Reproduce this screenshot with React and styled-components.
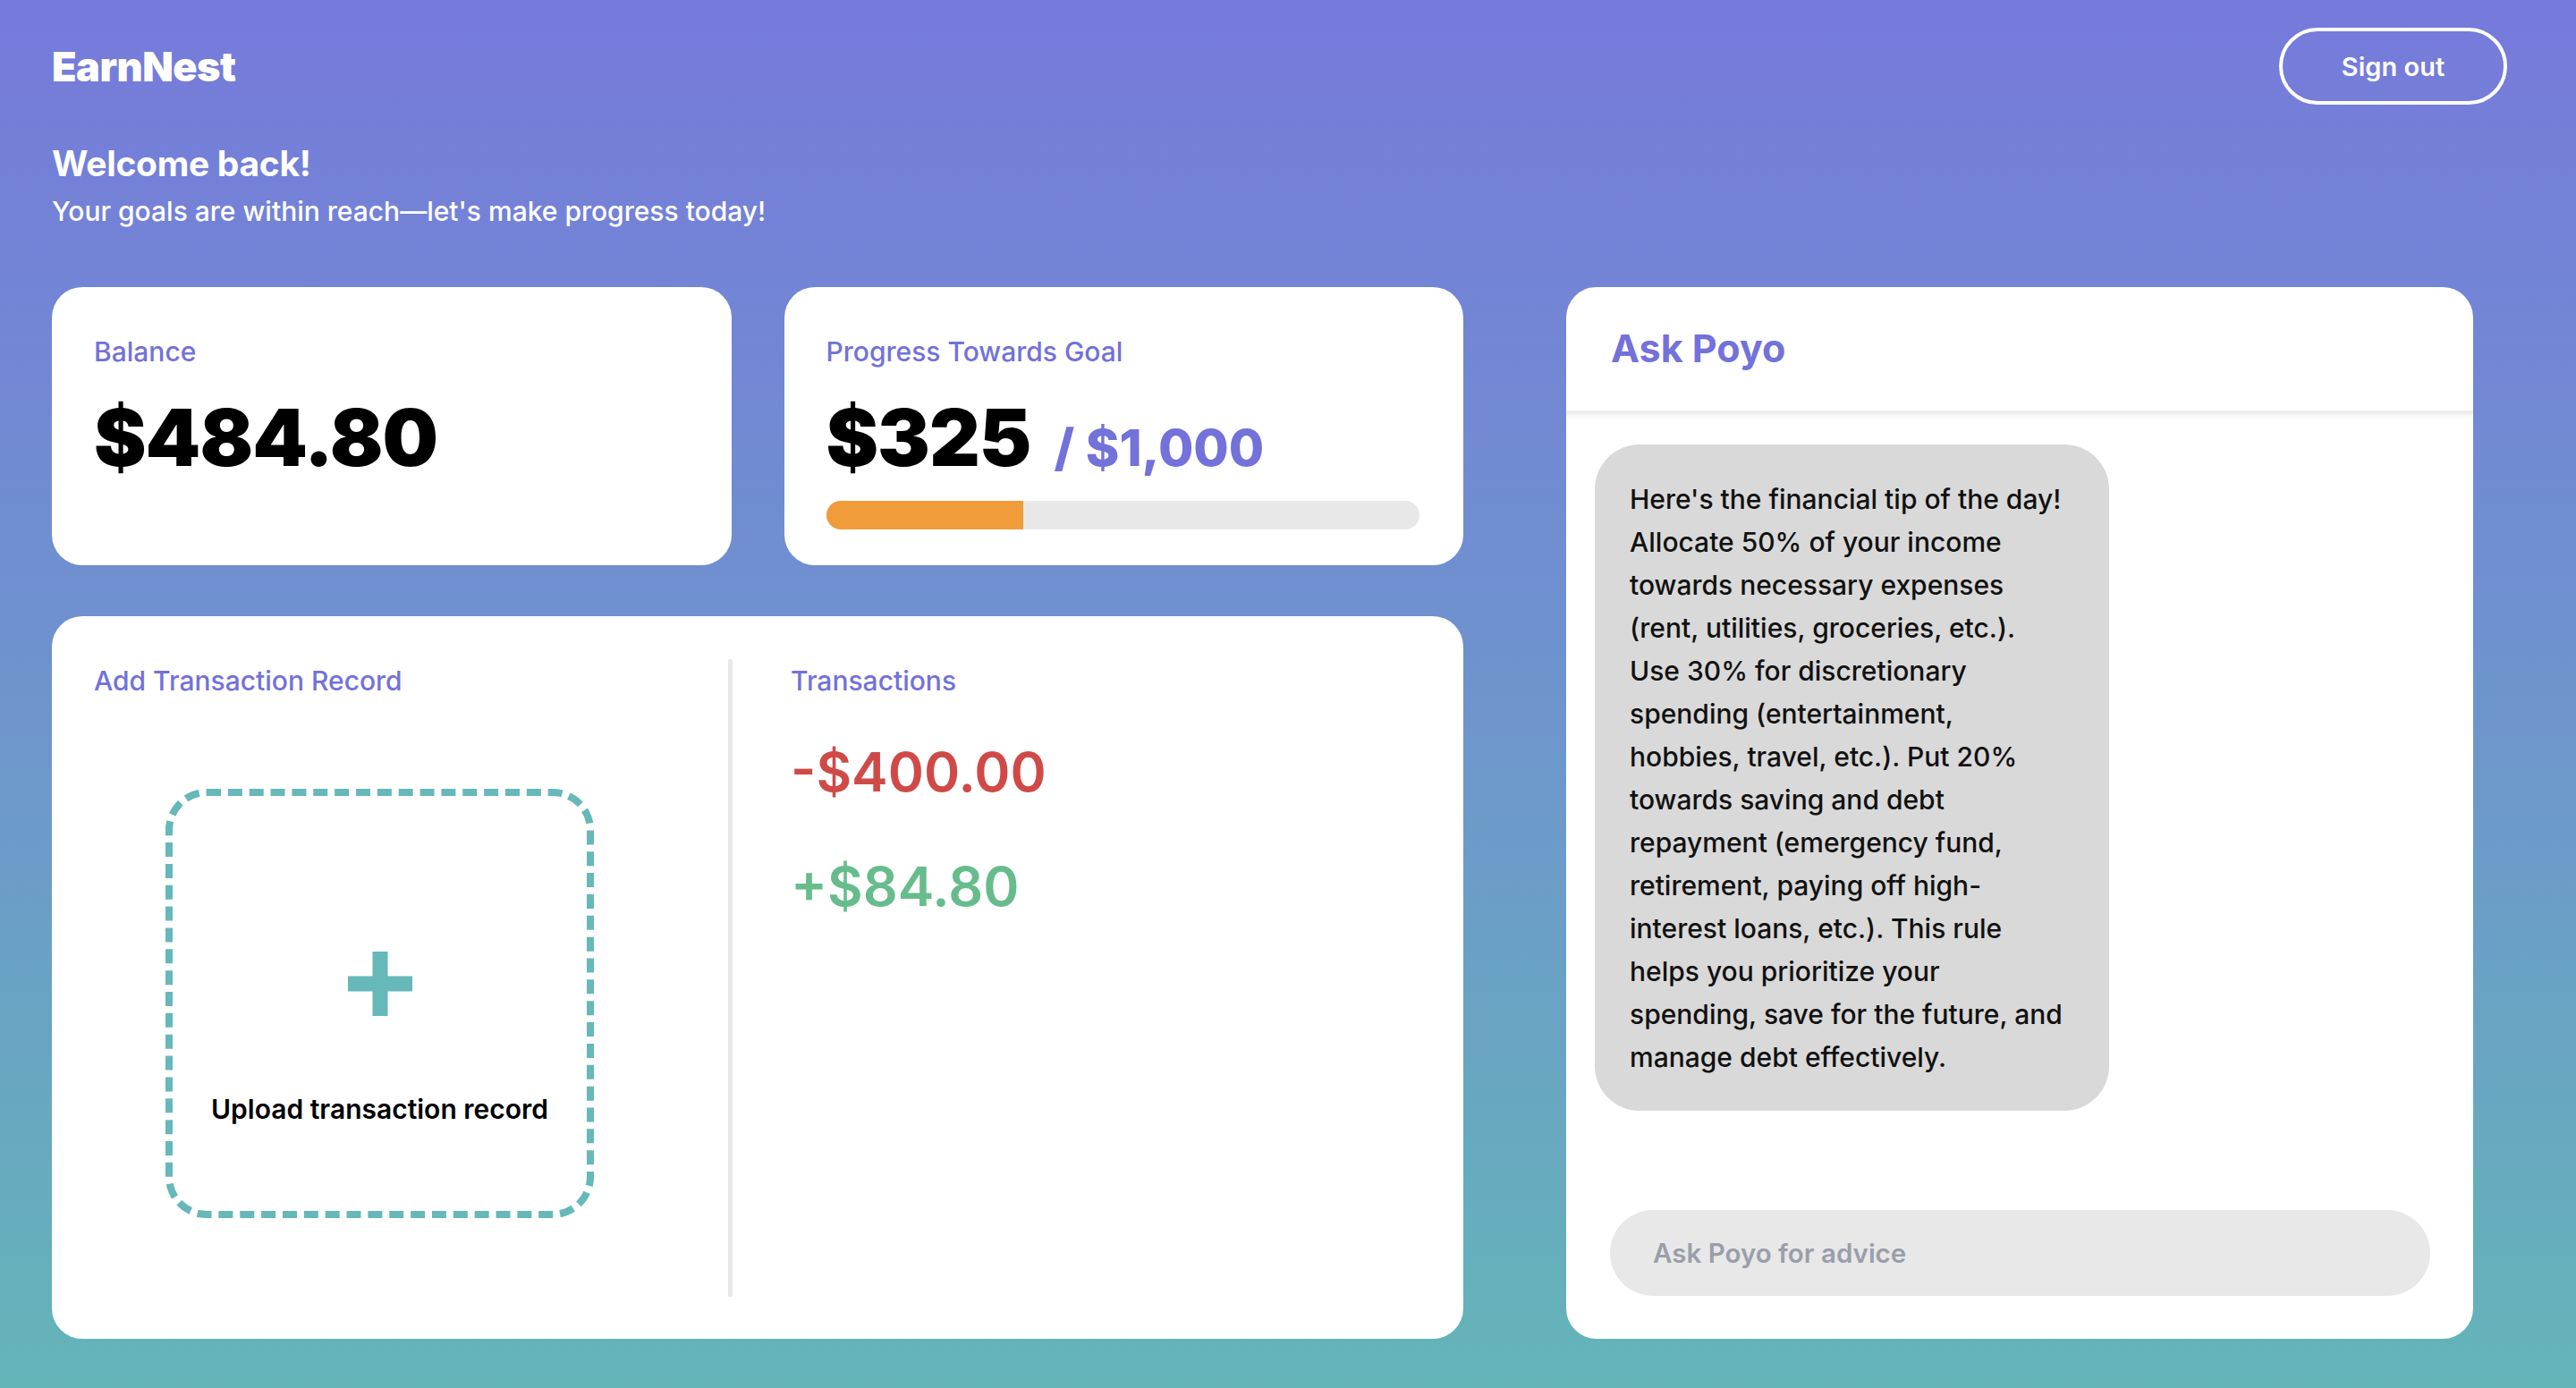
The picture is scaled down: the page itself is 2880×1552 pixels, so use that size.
import React from "react";
import styled, { createGlobalStyle } from "styled-components";

const GlobalStyle = createGlobalStyle`
  * { box-sizing: border-box; }
  html, body { margin: 0; padding: 0; }
  body {
    font-family: Inter, Lato, "Open Sans", sans-serif;
    -webkit-font-smoothing: antialiased;
  }
`;

const Page = styled.div`
  min-height: 100vh;
  background: linear-gradient(180deg, #767adb 0%, #6f91cf 45%, #64b5b8 100%);
  padding: 31px 77px 56px 58px;
`;

const TopBar = styled.header`
  display: flex;
  align-items: center;
  justify-content: space-between;
`;

const Logo = styled.div`
  color: #fff;
  font-size: 45px;
  font-weight: 900;
  line-height: 1;
  letter-spacing: -0.5px;
`;

const SignOut = styled.button`
  width: 255px;
  height: 86px;
  border: 4px solid #fff;
  border-radius: 43px;
  background: transparent;
  color: #fff;
  font-family: inherit;
  font-size: 29px;
  font-weight: 600;
  cursor: pointer;
`;

const Welcome = styled.section`
  margin-top: 43px;
  color: #fff;
`;

const Title = styled.h1`
  margin: 0;
  font-size: 39px;
  font-weight: 700;
  line-height: 1.2;
  letter-spacing: -0.3px;
`;

const Subtitle = styled.p`
  margin: 11px 0 0;
  font-size: 30px;
  font-weight: 500;
  line-height: 1.2;
`;

const Main = styled.main`
  margin-top: 67px;
  margin-right: 38px;
  display: grid;
  grid-template-columns: 1578px 1fr;
  column-gap: 115px;
`;

const LeftColumn = styled.div`
  display: grid;
  grid-template-rows: 311px 808px;
  row-gap: 57px;
`;

const StatRow = styled.div`
  display: grid;
  grid-template-columns: 1fr 1fr;
  column-gap: 59px;
`;

const Card = styled.div`
  background: #fff;
  border-radius: 34px;
`;

const StatCard = styled(Card)`
  padding: 54px 49px 39px 47px;
`;

const Label = styled.div`
  color: #7371da;
  font-size: 30px;
  font-weight: 500;
  line-height: 1.2;
`;

const AmountRow = styled.div`
  margin-top: 26px;
  display: flex;
  align-items: baseline;
`;

const BigAmount = styled.div`
  color: #000;
  font-size: 88px;
  font-weight: 900;
  line-height: 1.2;
  letter-spacing: -1px;
`;

const Goal = styled.span`
  margin-left: 26px;
  color: #7371da;
  font-size: 57px;
  font-weight: 800;
  line-height: 1;
`;

const Track = styled.div`
  margin-top: 18px;
  height: 32px;
  border-radius: 16px;
  background: #e8e8e8;
  overflow: hidden;
`;

const Fill = styled.div`
  height: 100%;
  background: #f09c3a;
`;

const RecordCard = styled(Card)`
  display: grid;
  grid-template-columns: 756px 5px 1fr;
  padding: 48px 0 47px;
`;

const Pane = styled.div`
  padding: 6px 0 0 ${(p) => p.$inset}px;
`;

const Divider = styled.div`
  background: #e8e8e8;
  border-radius: 2px;
`;

const DropZone = styled.div`
  margin: 103px 0 0 80px;
  width: 479px;
  height: 480px;
  border: 8px dashed #66b8b9;
  border-radius: 46px;
  display: flex;
  flex-direction: column;
  align-items: center;
  padding-top: 174px;
  cursor: pointer;
`;

const UploadText = styled.div`
  margin-top: 86px;
  color: #000;
  font-size: 30px;
  font-weight: 600;
  line-height: 1.2;
`;

const TxList = styled.div`
  display: flex;
  flex-direction: column;
  margin-top: 48px;
  gap: 55px;
`;

const TxAmount = styled.div`
  color: ${(p) => (p.$positive ? "#67bc8c" : "#cf4a47")};
  font-size: 61px;
  font-weight: 600;
  line-height: 1.2;
`;

const ChatCard = styled(Card)`
  display: flex;
  flex-direction: column;
  overflow: hidden;
`;

const ChatHeader = styled.div`
  padding: 43px 50px 44px;
  border-bottom: 4px solid #eeeeee;
  box-shadow: 0 3px 6px rgba(0, 0, 0, 0.05);
`;

const ChatTitle = styled.h2`
  margin: 0;
  color: #7371da;
  font-size: 43px;
  font-weight: 700;
  line-height: 1.2;
`;

const Bubble = styled.div`
  margin: 34px 0 0 32px;
  width: 575px;
  padding: 37px 40px 36px 39px;
  background: #d9d9d9;
  border-radius: 50px;
  color: #111;
  font-size: 30px;
  font-weight: 500;
  line-height: 48px;
  white-space: pre;
`;

const InputWrap = styled.div`
  margin-top: auto;
  padding: 0 48px 48px 49px;
`;

const AskInput = styled.input`
  width: 100%;
  height: 96px;
  border: none;
  border-radius: 48px;
  background: #e8e8e8;
  padding: 0 48px;
  font-family: inherit;
  font-size: 29.5px;
  font-weight: 600;
  color: #333;
  outline: none;
  &::placeholder {
    color: #9a9eaa;
  }
`;

const PlusIcon = () => (
  <svg width="72" height="72" viewBox="0 0 72 72">
    <rect x="27.5" y="0" width="17" height="72" fill="#66b8b9" />
    <rect x="0" y="27.5" width="72" height="17" fill="#66b8b9" />
  </svg>
);

const tipLines = [
  "Here's the financial tip of the day!",
  "Allocate 50% of your income",
  "towards necessary expenses",
  "(rent, utilities, groceries, etc.).",
  "Use 30% for discretionary",
  "spending (entertainment,",
  "hobbies, travel, etc.). Put 20%",
  "towards saving and debt",
  "repayment (emergency fund,",
  "retirement, paying off high-",
  "interest loans, etc.). This rule",
  "helps you prioritize your",
  "spending, save for the future, and",
  "manage debt effectively.",
];

const App = () => {
  const saved = 325;
  const goal = 1000;
  return (
    <Page>
      <GlobalStyle />
      <TopBar>
        <Logo>EarnNest</Logo>
        <SignOut>Sign out</SignOut>
      </TopBar>
      <Welcome>
        <Title>Welcome back!</Title>
        <Subtitle>Your goals are within reach—let's make progress today!</Subtitle>
      </Welcome>
      <Main>
        <LeftColumn>
          <StatRow>
            <StatCard>
              <Label>Balance</Label>
              <AmountRow>
                <BigAmount>$484.80</BigAmount>
              </AmountRow>
            </StatCard>
            <StatCard>
              <Label>Progress Towards Goal</Label>
              <AmountRow>
                <BigAmount>$325</BigAmount>
                <Goal>/ $1,000</Goal>
              </AmountRow>
              <Track>
                <Fill style={{ width: `${(saved / goal) * 100 + 0.8}%` }} />
              </Track>
            </StatCard>
          </StatRow>
          <RecordCard>
            <Pane $inset={47}>
              <Label>Add Transaction Record</Label>
              <DropZone>
                <PlusIcon />
                <UploadText>Upload transaction record</UploadText>
              </DropZone>
            </Pane>
            <Divider />
            <Pane $inset={65}>
              <Label>Transactions</Label>
              <TxList>
                <TxAmount>-$400.00</TxAmount>
                <TxAmount $positive>+$84.80</TxAmount>
              </TxList>
            </Pane>
          </RecordCard>
        </LeftColumn>
        <ChatCard>
          <ChatHeader>
            <ChatTitle>Ask Poyo</ChatTitle>
          </ChatHeader>
          <Bubble>{tipLines.join("\n")}</Bubble>
          <InputWrap>
            <AskInput placeholder="Ask Poyo for advice" />
          </InputWrap>
        </ChatCard>
      </Main>
    </Page>
  );
};

export default App;
